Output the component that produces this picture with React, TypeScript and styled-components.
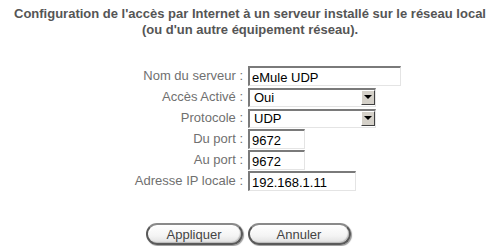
import React from "react";
import styled, { createGlobalStyle } from "styled-components";

const Global = createGlobalStyle`
  html, body { margin: 0; padding: 0; background: #fff; }
  body { font-family: "Liberation Sans", Arial, sans-serif; font-size: 13px; color: #666; }
`;

const Page = styled.div`
  width: 500px;
  height: 246px;
  display: flex;
  flex-direction: column;
  align-items: center;
  padding-top: 6px;
  box-sizing: border-box;
`;

const Title = styled.h1`
  margin: 0;
  font-size: 13px;
  font-weight: bold;
  color: #555;
  text-align: center;
  line-height: 16px;
`;

const Form = styled.div`
  margin-top: 28px;
  width: 100%;
  display: grid;
  grid-template-columns: 243px auto;
  column-gap: 5px;
  row-gap: 1px;
  align-items: center;
`;

const Label = styled.label`
  text-align: right;
  color: #707070;
  font-size: 13px;
  line-height: 20px;
`;

const Field = styled.input<{ $w: number }>`
  box-sizing: border-box;
  width: ${(p) => p.$w}px;
  height: 20px;
  margin: 0;
  padding: 1px 2px 0;
  font-family: "Liberation Sans", Arial, sans-serif;
  font-size: 13px;
  color: #000;
  background: #fff;
  border-style: solid;
  border-width: 2px 1px 1px 2px;
  border-color: #7a7a7a #e4e4e4 #e4e4e4 #7a7a7a;
  outline: none;
`;

const SelectWrap = styled.div`
  position: relative;
  width: 128px;
  height: 19px;
`;

const Select = styled.select`
  appearance: none;
  box-sizing: border-box;
  width: 100%;
  height: 100%;
  margin: 0;
  padding: 0 0 0 4px;
  font-family: "Liberation Sans", Arial, sans-serif;
  font-size: 13px;
  color: #000;
  background: #fff;
  border-style: solid;
  border-width: 2px 1px 1px 2px;
  border-color: #7a7a7a #e4e4e4 #e4e4e4 #7a7a7a;
  border-radius: 0;
  outline: none;
`;

const ArrowBtn = styled.span`
  position: absolute;
  top: 2px;
  right: 1px;
  width: 14px;
  height: 15px;
  box-sizing: border-box;
  background: #d4d0c8;
  border-style: solid;
  border-width: 1px;
  border-color: #fff #404040 #404040 #fff;
  display: flex;
  align-items: center;
  justify-content: center;
  pointer-events: none;
  &::after {
    content: "";
    border-left: 4px solid transparent;
    border-right: 4px solid transparent;
    border-top: 4px solid #000;
  }
`;

const Buttons = styled.div`
  margin-top: 32px;
  display: flex;
  gap: 5px;
  justify-content: center;
  padding-right: 4px;
`;

const Pill = styled.button<{ $w: number }>`
  box-sizing: border-box;
  width: ${(p) => p.$w}px;
  height: 22px;
  padding: 0;
  border-radius: 11px;
  border: 2px solid #5a5a5a;
  border-top-color: #8a8a8a;
  background: linear-gradient(#ffffff, #f4f4f4 60%, #e0e0e0);
  box-shadow: inset 1px 1px 0 #fff, inset -1px -1px 1px #bbb, 1px 1px 1px #999;
  font-family: "Liberation Sans", Arial, sans-serif;
  font-size: 13px;
  color: #444;
  cursor: pointer;
`;

function Dropdown({ value }: { value: string }) {
  return (
    <SelectWrap>
      <Select defaultValue={value}>
        <option>{value}</option>
      </Select>
      <ArrowBtn />
    </SelectWrap>
  );
}

export default function App() {
  return (
    <>
      <Global />
      <Page>
        <Title>
          Configuration de l'accès par Internet à un serveur installé sur le réseau local
          <br />
          (ou d'un autre équipement réseau).
        </Title>
        <Form>
          <Label>Nom du serveur :</Label>
          <Field $w={153} defaultValue="eMule UDP" />
          <Label>Accès Activé :</Label>
          <Dropdown value="Oui" />
          <Label>Protocole :</Label>
          <Dropdown value="UDP" />
          <Label>Du port :</Label>
          <Field $w={57} defaultValue="9672" />
          <Label>Au port :</Label>
          <Field $w={57} defaultValue="9672" />
          <Label>Adresse IP locale :</Label>
          <Field $w={108} defaultValue="192.168.1.11" />
        </Form>
        <Buttons>
          <Pill $w={97}>Appliquer</Pill>
          <Pill $w={103}>Annuler</Pill>
        </Buttons>
      </Page>
    </>
  );
}
